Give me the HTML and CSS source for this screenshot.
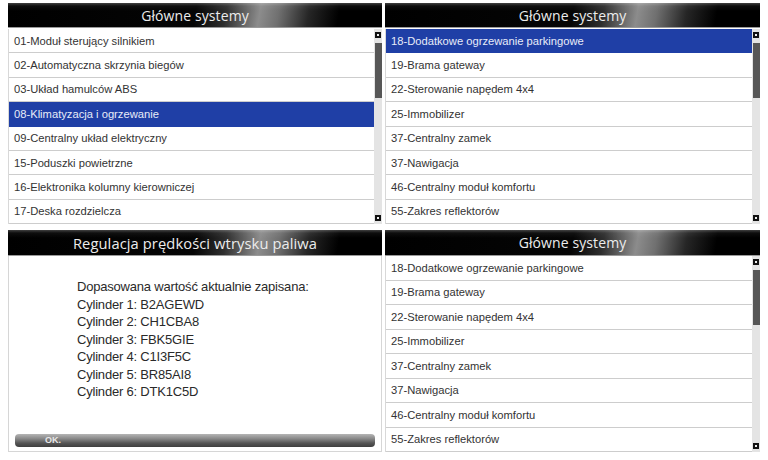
FILE: index.html
```html
<!DOCTYPE html>
<html lang="pl">
<head>
<meta charset="utf-8">
<title>Główne systemy</title>
<link rel="stylesheet" href="styles.css">
</head>
<body>
<div class="screen">
  <section class="panel top">
    <div class="hdr">Główne systemy</div>
    <div class="list">
      <ul class="rows">
        <li>01-Moduł sterujący silnikiem</li>
        <li>02-Automatyczna skrzynia biegów</li>
        <li>03-Układ hamulców ABS</li>
        <li class="sel">08-Klimatyzacja i ogrzewanie</li>
        <li>09-Centralny układ elektryczny</li>
        <li>15-Poduszki powietrzne</li>
        <li>16-Elektronika kolumny kierowniczej</li>
        <li>17-Deska rozdzielcza</li>
      </ul>
      <div class="sb"><span class="arr"></span><span class="thumb"></span><span class="fill"></span><span class="arr"></span></div>
    </div>
  </section>
  <section class="panel top">
    <div class="hdr">Główne systemy</div>
    <div class="list">
      <ul class="rows">
        <li class="sel">18-Dodatkowe ogrzewanie parkingowe</li>
        <li>19-Brama gateway</li>
        <li>22-Sterowanie napędem 4x4</li>
        <li>25-Immobilizer</li>
        <li>37-Centralny zamek</li>
        <li>37-Nawigacja</li>
        <li>46-Centralny moduł komfortu</li>
        <li>55-Zakres reflektorów</li>
      </ul>
      <div class="sb"><span class="arr"></span><span class="thumb"></span><span class="fill"></span><span class="arr"></span></div>
    </div>
  </section>
  <section class="panel bottom">
    <div class="hdr big">Regulacja prędkości wtrysku paliwa</div>
    <div class="body">
      <div class="msg">
        <p>Dopasowana wartość aktualnie zapisana:</p>
        <p>Cylinder 1: B2AGEWD</p>
        <p>Cylinder 2: CH1CBA8</p>
        <p>Cylinder 3: FBK5GIE</p>
        <p>Cylinder 4: C1I3F5C</p>
        <p>Cylinder 5: BR85AI8</p>
        <p>Cylinder 6: DTK1C5D</p>
      </div>
      <div class="btn">OK.</div>
    </div>
  </section>
  <section class="panel bottom">
    <div class="hdr">Główne systemy</div>
    <div class="list">
      <ul class="rows">
        <li>18-Dodatkowe ogrzewanie parkingowe</li>
        <li>19-Brama gateway</li>
        <li>22-Sterowanie napędem 4x4</li>
        <li>25-Immobilizer</li>
        <li>37-Centralny zamek</li>
        <li>37-Nawigacja</li>
        <li>46-Centralny moduł komfortu</li>
        <li>55-Zakres reflektorów</li>
      </ul>
      <div class="sb"><span class="arr"></span><span class="thumb"></span><span class="fill"></span><span class="arr"></span></div>
    </div>
  </section>
</div>
</body>
</html>
```
FILE: styles.css
```css
* { box-sizing: border-box; }
html, body { margin: 0; padding: 0; background: #fff; }
body { width: 768px; height: 460px; overflow: hidden; font-family: "Liberation Sans", Arial, sans-serif; }

.screen {
  display: grid;
  grid-template-columns: 374px 375px;
  grid-template-rows: 221px 222px;
  column-gap: 3px;
  row-gap: 6px;
  padding: 3px 0 0 8px;
}

.panel { display: flex; flex-direction: column; }

.hdr {
  height: 25px;
  flex: none;
  display: flex;
  align-items: center;
  justify-content: center;
  font-family: "Open Sans", "DejaVu Sans", sans-serif;
  font-size: 14px;
  color: #ececec;
  letter-spacing: 0.1px;
  background:
    linear-gradient(to bottom, rgba(255,255,255,0.25) 0, rgba(255,255,255,0.05) 3px, rgba(255,255,255,0) 8px),
    linear-gradient(100deg, #000 0%, #050505 50%, #2e2e2e 58%, #8c8c8c 67%, #707070 72%, #262626 80%, #000 88%, #000 100%);
  border-bottom: 1px solid #9a9a9a;
}
.bottom .hdr { height: 26px; }
.hdr.big { font-size: 14.7px; }
.top .hdr { margin-bottom: 1px; }

.list {
  flex: 1;
  display: flex;
  border-left: 1px solid #d8d8d8;
}

.rows {
  list-style: none;
  margin: 0;
  padding: 0;
  flex: 1;
  display: flex;
  flex-direction: column;
}
.rows li {
  flex: 1;
  display: flex;
  align-items: center;
  padding-left: 5px;
  font-size: 11.2px;
  color: #333;
  background: #fff;
  border-bottom: 1px solid #cdcdcd;
}
.rows li.sel {
  background: #1f3fa6;
  color: #e8ecf8;
  border-bottom-color: #1f3fa6;
}

.sb {
  width: 8px;
  flex: none;
  display: flex;
  flex-direction: column;
  align-items: center;
  background: #e4e4e4;
  padding: 3px 0 3px;
}
.arr {
  width: 6px;
  height: 6px;
  background: #111;
  position: relative;
  flex: none;
}
.arr::after {
  content: "";
  position: absolute;
  left: 2px; top: 2px;
  width: 2px; height: 2px;
  background: #eee;
}
.thumb {
  width: 7px;
  height: 55px;
  margin-top: 5px;
  background: #575757;
  flex: none;
}
.fill { flex: 1; }

.body {
  flex: 1;
  border: 1px solid #d6d6d6;
  border-top: none;
  display: flex;
  flex-direction: column;
  padding: 0 6px 4px 6px;
}
.msg {
  flex: 1;
  padding: 22px 0 0 62px;
}
.msg p {
  margin: 0;
  font-size: 13px;
  letter-spacing: -0.2px;
  line-height: 17.5px;
  color: #2a2a2a;
}
.btn {
  height: 13px;
  border-radius: 4px;
  background: linear-gradient(to bottom, #b5b5b5 0%, #8a8a8a 35%, #555 70%, #3e3e3e 100%);
  color: #e8e8e8;
  font-size: 9px;
  font-weight: bold;
  line-height: 13px;
  padding-left: 30px;
}
```
